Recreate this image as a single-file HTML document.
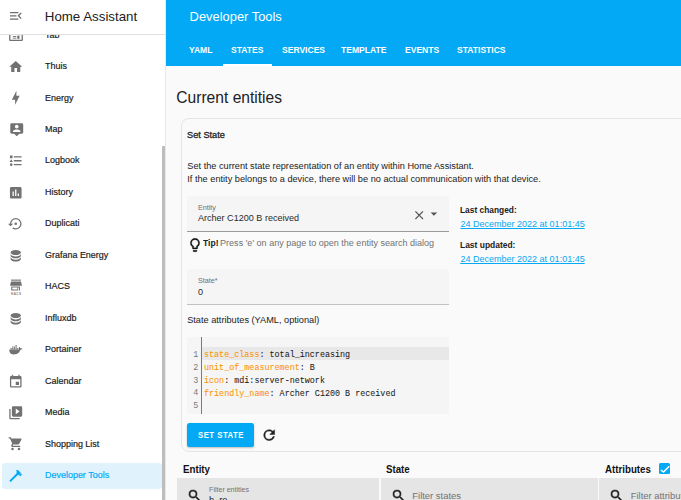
<!DOCTYPE html>
<html><head><meta charset="utf-8">
<style>
*{box-sizing:border-box;margin:0;padding:0}
html,body{width:681px;height:500px;overflow:hidden;background:#fafafa;font-family:"Liberation Sans",sans-serif;color:#212121}
.a{position:absolute;white-space:nowrap}
svg.i{position:absolute;display:block}
#sb{position:absolute;left:0;top:0;width:166px;height:500px;background:#fff;border-right:1px solid #e8e8e8;overflow:hidden}
#sbh{position:absolute;left:0;top:0;width:165px;height:35px;background:#fff;border-bottom:1px solid #e0e0e0;z-index:2}
.it{font-size:9.8px;line-height:9.8px;color:#212121;-webkit-text-stroke:0.2px #212121;transform:scaleX(0.915);transform-origin:0 0}
.ic{fill:#727272}
#hdr{position:absolute;left:166px;top:0;width:515px;height:66px;background:#03a9f4}
.tab{font:bold 9.2px/9.2px "Liberation Sans",sans-serif;color:#fff;top:45.8px;transform:scaleX(0.93);transform-origin:0 0}
.card{position:absolute;left:181px;top:118px;width:560px;height:334px;border:1px solid #e4e4e4;border-radius:8px;background:#fafafa}
.fld{position:absolute;background:#f5f5f5;border-radius:3px 3px 0 0;border-bottom:1px solid #8c8c8c}
.lbl{font-size:7.2px;line-height:7.2px;color:#6f6f6f}
.val{font-size:9.07px;line-height:9.07px;color:#2a2a2a}
.b9{font-size:9.2px;line-height:9.2px}
.bold{font-weight:bold}
.lnk{font-size:9.02px;line-height:9.02px;color:#03a9f4;text-decoration:underline}
.code{font-family:"Liberation Mono",monospace;font-size:9px;line-height:9px;color:#1a1a1a;-webkit-text-stroke:0.05px currentColor;transform:scaleX(0.933);transform-origin:0 0}
.k{color:#fb9400}
.ln{font-family:"Liberation Mono",monospace;font-size:8.4px;line-height:8.4px;color:#7a7a7a}
.th{font-weight:bold;font-size:10.8px;line-height:10.8px;color:#111;transform:scaleX(0.9);transform-origin:0 0}
.flt{position:absolute;top:478px;height:40px;background:#e5e5e5}
</style></head><body>

<!-- SIDEBAR -->
<div id="sb">
  <!-- items -->
  <!-- Tab (i=0) -->
  <svg class="i ic" style="left:4px;top:25.5px" width="25" height="20" viewBox="0 0 25 20"><path fill-rule="evenodd" d="M6.1 3H17.9Q18.9 3 18.9 4V14.1Q18.9 15.1 17.9 15.1H6.1Q5.1 15.1 5.1 14.1V4Q5.1 3 6.1 3ZM6.4 4.3V13.8H17.6V4.3Z"/><rect x="8.8" y="10" width="3.5" height="0.9"/><rect x="8.8" y="11.7" width="3.5" height="0.9"/><rect x="13.3" y="9.6" width="2.2" height="3.2"/></svg>
  <div class="a it" style="left:45.3px;top:29.5px">Tab</div>

  <svg class="i ic" style="left:8.25px;top:58.75px" width="15.5" height="15.5" viewBox="0 0 24 24"><path d="M10,20V14H14V20H19V12H22L12,3L2,12H5V20H10Z"/></svg>
  <div class="a it" style="left:45.3px;top:61.0px">Thuis</div>

  <svg class="i ic" style="left:8.25px;top:90.25px" width="15.5" height="15.5" viewBox="0 0 24 24"><path d="M11 15H6L13 1V9H18L11 23V15Z"/></svg>
  <div class="a it" style="left:45.3px;top:92.5px">Energy</div>

  <svg class="i ic" style="left:8.6px;top:121.75px" width="15.5" height="15.5" viewBox="0 0 24 24"><path fill-rule="evenodd" d="M20,2A2,2 0 0,1 22,4V16A2,2 0 0,1 20,18H16L12,22L8,18H4A2,2 0 0,1 2,16V4A2,2 0 0,1 4,2H20M12,4.2A2.9,2.9 0 0,0 9.1,7.1A2.9,2.9 0 0,0 12,10A2.9,2.9 0 0,0 14.9,7.1A2.9,2.9 0 0,0 12,4.2M17.8,15.4V14.5C17.8,12.5 14.2,11.5 12,11.5C9.8,11.5 6.2,12.5 6.2,14.5V15.4H17.8Z"/></svg>
  <div class="a it" style="left:45.3px;top:123.9px">Map</div>

  <svg class="i ic" style="left:8.25px;top:153.15px" width="15.5" height="15.5" viewBox="0 0 24 24"><path d="M5,9.5L7.5,14H2.5L5,9.5M3,4H7V8H3V4M5,20A2,2 0 0,0 7,18A2,2 0 0,0 5,16A2,2 0 0,0 3,18A2,2 0 0,0 5,20M9,5V7H21V5H9M9,19H21V17H9V19M9,13H21V11H9V13Z"/></svg>
  <div class="a it" style="left:45.3px;top:155.4px">Logbook</div>

  <svg class="i ic" style="left:8.25px;top:184.65px" width="15.5" height="15.5" viewBox="0 0 24 24"><path d="M9 17H7V10H9V17M13 17H11V7H13V17M17 17H15V13H17V17M19 3H5C3.9 3 3 3.9 3 5V19C3 20.1 3.9 21 5 21H19C20.1 21 21 20.1 21 19V5C21 3.9 20.1 3 19 3Z"/></svg>
  <div class="a it" style="left:45.3px;top:186.9px">History</div>

  <svg class="i ic" style="left:8.25px;top:216.15px" width="15.5" height="15.5" viewBox="0 0 24 24"><path d="M12,3A9,9 0 0,0 3,12H0L4,16L8,12H5A7,7 0 0,1 12,5A7,7 0 0,1 19,12A7,7 0 0,1 12,19C10.5,19 9.09,18.5 7.94,17.7L6.5,19.14C8.04,20.3 9.94,21 12,21A9,9 0 0,0 21,12A9,9 0 0,0 12,3M14,12A2,2 0 0,0 12,10A2,2 0 0,0 10,12A2,2 0 0,0 12,14A2,2 0 0,0 14,12Z"/></svg>
  <div class="a it" style="left:45.3px;top:218.4px">Duplicati</div>

  <svg class="i ic" style="left:8.25px;top:247.65px" width="15.5" height="15.5" viewBox="0 0 24 24"><path d="M12,3C7.58,3 4,4.79 4,7C4,9.21 7.58,11 12,11C16.42,11 20,9.21 20,7C20,4.79 16.42,3 12,3M4,9V12C4,14.21 7.58,16 12,16C16.42,16 20,14.21 20,12V9C20,11.21 16.42,13 12,13C7.58,13 4,11.21 4,9M4,14V17C4,19.21 7.58,21 12,21C16.42,21 20,19.21 20,17V14C20,16.21 16.42,18 12,18C7.58,18 4,16.21 4,14Z"/></svg>
  <div class="a it" style="left:45.3px;top:249.9px">Grafana Energy</div>

  <svg class="i ic" style="left:5px;top:275px" width="25" height="25" viewBox="0 0 25 25"><rect x="6" y="4.6" width="10" height="1.1"/><path d="M6 6.6H16L17 10.8H5Z"/><path d="M6.2 11.6H15V15.6H6.2Z M7.3 12.6V14.6H12.4V12.6Z M13.2 12.6V15.6H14V12.6Z" fill-rule="evenodd"/><text x="11" y="19.9" font-size="3" font-weight="bold" text-anchor="middle" font-family="Liberation Sans" fill="#777" textLength="10">HACS</text></svg>
  <div class="a it" style="left:45.3px;top:281.3px">HACS</div>

  <svg class="i ic" style="left:8.25px;top:310.55px" width="15.5" height="15.5" viewBox="0 0 24 24"><path d="M12,3C7.58,3 4,4.79 4,7C4,9.21 7.58,11 12,11C16.42,11 20,9.21 20,7C20,4.79 16.42,3 12,3M4,9V12C4,14.21 7.58,16 12,16C16.42,16 20,14.21 20,12V9C20,11.21 16.42,13 12,13C7.58,13 4,11.21 4,9M4,14V17C4,19.21 7.58,21 12,21C16.42,21 20,19.21 20,17V14C20,16.21 16.42,18 12,18C7.58,18 4,16.21 4,14Z"/></svg>
  <div class="a it" style="left:45.3px;top:312.8px">Influxdb</div>

  <svg class="i ic" style="left:8.25px;top:342.05px" width="15.5" height="15.5" viewBox="0 0 24 24"><path d="M21.81 10.25C21.75 10.21 21.25 9.82 20.17 9.82C19.89 9.82 19.61 9.85 19.33 9.9C19.12 8.5 17.95 7.79 17.9 7.76L17.61 7.59L17.43 7.86C17.19 8.22 17 8.63 16.92 9.05C16.72 9.85 16.84 10.61 17.25 11.26C16.76 11.54 15.96 11.61 15.79 11.61H2.62C2.27 11.61 2 11.89 2 12.24C2 13.39 2.17 14.54 2.57 15.62C3.03 16.81 3.72 17.69 4.61 18.23C5.61 18.84 7.27 19.190 9.15 19.19C10 19.19 10.85 19.11 11.67 18.96C12.82 18.75 13.92 18.36 14.94 17.78C15.78 17.29 16.530 16.67 17.17 15.95C18.24 14.74 18.88 13.39 19.35 12.19H19.54C20.71 12.19 21.43 11.72 21.83 11.33C22.1 11.08 22.29 10.78 22.43 10.43L22.5 10.21L21.81 10.25M3.94 11.24H5.77V9.27H3.94V11.24M6.5 11.24H8.33V9.27H6.5V11.24M9.1 11.24H10.93V9.27H9.1V11.24M11.66 11.24H13.5V9.27H11.66V11.24M6.5 8.9H8.33V6.93H6.5V8.9M9.1 8.9H10.93V6.93H9.1V8.9M11.66 8.9H13.5V6.93H11.66V8.9M11.66 6.55H13.5V4.58H11.66V6.55M14.22 11.24H16.06V9.27H14.22V11.24Z"/></svg>
  <div class="a it" style="left:45.3px;top:344.3px">Portainer</div>

  <svg class="i ic" style="left:8.25px;top:373.55px" width="15.5" height="15.5" viewBox="0 0 24 24"><path d="M19,19H5V8H19M16,1V3H8V1H6V3H5C3.89,3 3,3.89 3,5V19A2,2 0 0,0 5,21H19A2,2 0 0,0 21,19V5C21,3.89 20.1,3 19,3H18V1M17,12H12V17H17V12Z"/></svg>
  <div class="a it" style="left:45.3px;top:375.8px">Calendar</div>

  <svg class="i ic" style="left:8.25px;top:404.95px" width="15.5" height="15.5" viewBox="0 0 24 24"><path d="M4,6H2V20A2,2 0 0,0 4,22H18V20H4V6M20,2A2,2 0 0,1 22,4V16A2,2 0 0,1 20,18H8A2,2 0 0,1 6,16V4A2,2 0 0,1 8,2H20M12,14.5L18,10L12,5.5V14.5Z"/></svg>
  <div class="a it" style="left:45.3px;top:407.2px">Media</div>

  <svg class="i ic" style="left:8.25px;top:436.45px" width="15.5" height="15.5" viewBox="0 0 24 24"><path d="M17,18C15.89,18 15,18.89 15,20A2,2 0 0,0 17,22A2,2 0 0,0 19,20C19,18.89 18.1,18 17,18M1,2V4H3L6.6,11.59L5.24,14.04C5.09,14.32 5,14.65 5,15A2,2 0 0,0 7,17H19V15H7.42A0.25,0.25 0 0,1 7.17,14.75C7.17,14.7 7.18,14.66 7.2,14.63L8.1,13H15.55C16.3,13 16.96,12.58 17.3,11.97L20.88,5.5C20.95,5.34 21,5.17 21,5A1,1 0 0,0 20,4H5.21L4.27,2M7,18C5.89,18 5,18.89 5,20A2,2 0 0,0 7,22A2,2 0 0,0 9,20C9,18.89 8.1,18 7,18Z"/></svg>
  <div class="a it" style="left:45.3px;top:438.7px">Shopping List</div>

  <div class="a" style="left:2px;top:462.5px;width:159.5px;height:26px;border-radius:3px;background:#e0f3fd"></div>
  <svg class="i" style="left:8.25px;top:467.95px;fill:#03a9f4" width="15.5" height="15.5" viewBox="0 0 24 24"><path d="M2 19.63L13.43 8.2L12.72 7.5L14.14 6.07L12 3.89C13.2 2.7 15.09 2.7 16.27 3.89L19.87 7.5L18.45 8.91H21.29L22 9.62L18.45 13.21L17.74 12.5V9.62L16.27 11.04L15.56 10.33L4.13 21.76L2 19.63Z"/></svg>
  <div class="a it" style="left:45.3px;top:470.2px;color:#03a9f4;-webkit-text-stroke:0.2px #03a9f4">Developer Tools</div>

  <!-- scrollbar -->
  <div class="a" style="left:162px;top:145.5px;width:4px;height:360px;background:#bdbdbd;border-radius:1px"></div>
</div>
<div id="sbh">
  <svg class="i" style="left:8px;top:8px;fill:#6f6f6f" width="15.6" height="15.6" viewBox="0 0 24 24"><path d="M21,15.61L19.59,17L14.58,12L19.59,7L21,8.39L17.44,12L21,15.61M3,6H16V8H3V6M3,13V11H13V13H3M3,18V16H16V18H3Z"/></svg>
  <div class="a" style="left:44.8px;top:10.2px;font-size:13.3px;line-height:13.3px;color:#212121">Home Assistant</div>
</div>

<!-- HEADER -->
<div id="hdr"></div>
<div class="a" style="left:189.6px;top:11px;font-size:12.9px;line-height:12.9px;color:#fff">Developer Tools</div>
<div class="a tab" style="left:189px">YAML</div>
<div class="a tab" style="left:231.4px">STATES</div>
<div class="a tab" style="left:281.6px">SERVICES</div>
<div class="a tab" style="left:341.4px">TEMPLATE</div>
<div class="a tab" style="left:405.2px">EVENTS</div>
<div class="a tab" style="left:457px">STATISTICS</div>
<div class="a" style="left:223px;top:64px;width:48.6px;height:2px;background:#fff"></div>

<!-- CONTENT -->
<div class="a" style="left:176.3px;top:89.5px;font-size:15.6px;line-height:15.6px;color:#212121">Current entities</div>

<div class="card"></div>
<div class="a" style="left:187.2px;top:129.6px;font-size:9.6px;line-height:9.6px;color:#212121;-webkit-text-stroke:0.3px #212121;transform:scaleX(0.96);transform-origin:0 0">Set State</div>
<div class="a b9" style="left:187.3px;top:162px">Set the current state representation of an entity within Home Assistant.</div>
<div class="a b9" style="left:187.3px;top:175.1px">If the entity belongs to a device, there will be no actual communication with that device.</div>

<!-- entity field -->
<div class="fld" style="left:187.2px;top:195.8px;width:261.5px;height:36.2px;border-bottom-color:#9a9a9a"></div>
<div class="a lbl" style="left:197.9px;top:203.6px">Entity</div>
<div class="a val" style="left:197.9px;top:214.1px">Archer C1200 B received</div>
<svg class="i" style="left:412.2px;top:208.2px;fill:#555" width="14.4" height="14.4" viewBox="0 0 24 24"><path d="M19,6.41L17.59,5L12,10.59L6.41,5L5,6.41L10.59,12L5,17.59L6.41,19L12,13.41L17.59,19L19,17.59L13.41,12L19,6.41Z"/></svg>
<svg class="i" style="left:426px;top:206px;fill:#555" width="15.8" height="15.8" viewBox="0 0 24 24"><path d="M7,10L12,15L17,10H7Z"/></svg>

<!-- tip -->
<svg class="i" style="left:187.2px;top:236.9px;fill:#111" width="16" height="16" viewBox="0 0 24 24"><path stroke="#111" stroke-width="0.4" d="M12,2A7,7 0 0,1 19,9C19,11.38 17.81,13.47 16,14.74V17A1,1 0 0,1 15,18H9A1,1 0 0,1 8,17V14.74C6.19,13.47 5,11.38 5,9A7,7 0 0,1 12,2M9,21V20H15V21A1,1 0 0,1 14,22H10A1,1 0 0,1 9,21M12,4A5,5 0 0,0 7,9C7,11.05 8.23,12.81 10,13.58V16H14V13.58C15.77,12.81 17,11.05 17,9A5,5 0 0,0 12,4Z"/></svg>
<div class="a bold" style="left:202.9px;top:238.5px;font-size:9.2px;line-height:9.2px;color:#212121;transform:scaleX(0.93);transform-origin:0 0">Tip!</div>
<div class="a" style="left:220.1px;top:238.6px;font-size:9.02px;line-height:9.02px;color:#727272">Press 'e' on any page to open the entity search dialog</div>

<!-- last changed -->
<div class="a bold" style="left:460.4px;top:205.9px;font-size:9.2px;line-height:9.2px;color:#212121;transform:scaleX(0.91);transform-origin:0 0">Last changed:</div>
<div class="a lnk" style="left:460.4px;top:220px">24 December 2022 at 01:01:45</div>
<div class="a bold" style="left:460.4px;top:241.2px;font-size:9.2px;line-height:9.2px;color:#212121;transform:scaleX(0.92);transform-origin:0 0">Last updated:</div>
<div class="a lnk" style="left:460.4px;top:255px">24 December 2022 at 01:01:45</div>

<!-- state field -->
<div class="fld" style="left:187.2px;top:269.3px;width:261.5px;height:36.2px;border-bottom:1.5px solid #c2c2c2"></div>
<div class="a lbl" style="left:197.9px;top:277.1px">State*</div>
<div class="a val" style="left:197.9px;top:287.7px">0</div>

<div class="a b9" style="left:187.2px;top:315.9px">State attributes (YAML, optional)</div>

<!-- code editor -->
<div class="a" style="left:187.2px;top:336.8px;width:262px;height:76.8px;background:#f5f5f5;border-radius:3px 3px 0 0"></div>
<div class="a" style="left:202px;top:347.1px;width:247.2px;height:12.6px;background:#e8e8e8"></div>
<div class="a" style="left:201px;top:336.8px;width:1px;height:76.8px;background:#7a7a7a"></div>
<div class="a ln" style="left:193.2px;top:351.0px">1</div>
<div class="a ln" style="left:193.2px;top:363.8px">2</div>
<div class="a ln" style="left:193.2px;top:376.6px">3</div>
<div class="a ln" style="left:193.2px;top:389.4px">4</div>
<div class="a ln" style="left:193.2px;top:402.2px">5</div>
<div class="a code" style="left:204.3px;top:351.4px"><span class="k">state_class</span>: total_increasing</div>
<div class="a code" style="left:204.3px;top:364.2px"><span class="k">unit_of_measurement</span>: B</div>
<div class="a code" style="left:204.3px;top:377.0px"><span class="k">icon</span>: mdi:server-network</div>
<div class="a code" style="left:204.3px;top:389.8px"><span class="k">friendly_name</span>: Archer C1200 B received</div>

<!-- button -->
<div class="a" style="left:187px;top:423.2px;width:67px;height:23.8px;background:#03a9f4;border-radius:2.5px;box-shadow:0 1px 2px rgba(0,0,0,0.25)"></div>
<div class="a bold" style="left:197.9px;top:431.1px;font-size:9.2px;line-height:9.2px;letter-spacing:0.6px;color:#fff;transform:scaleX(0.843);transform-origin:0 0">SET STATE</div>
<svg class="i" style="left:261.3px;top:427px;fill:#212121" width="16.3" height="16.3" viewBox="0 0 24 24"><path stroke="#212121" stroke-width="0.7" d="M17.65,6.35C16.2,4.9 14.21,4 12,4A8,8 0 0,0 4,12A8,8 0 0,0 12,20C15.73,20 18.84,17.45 19.73,14H17.65C16.83,16.33 14.61,18 12,18A6,6 0 0,1 6,12A6,6 0 0,1 12,6C13.66,6 15.14,6.69 16.22,7.78L13,11H20V4L17.65,6.35Z"/></svg>

<!-- table header -->
<div class="a th" style="left:182.6px;top:464.3px">Entity</div>
<div class="a th" style="left:385.8px;top:464.3px">State</div>
<div class="a th" style="left:604.8px;top:464.3px">Attributes</div>
<div class="a" style="left:658.8px;top:462.5px;width:11.7px;height:11.8px;background:#03a9f4;border-radius:1.5px"></div>
<svg class="i" style="left:658.8px;top:462.5px" width="11.7" height="11.8" viewBox="0 0 24 24"><path d="M3.8 14.2L9.3 18.6L21 6.5" fill="none" stroke="#fff" stroke-width="3"/></svg>

<div class="flt" style="left:177.2px;width:201.6px"></div>
<div class="flt" style="left:381px;width:216.7px"></div>
<div class="flt" style="left:599px;width:100px"></div>
<svg class="i" style="left:187.4px;top:487.8px;fill:#212121" width="15.2" height="15.2" viewBox="0 0 24 24"><path stroke="#212121" stroke-width="0.6" d="M9.5,3A6.5,6.5 0 0,1 16,9.5C16,11.11 15.41,12.59 14.44,13.73L14.71,14H15.5L20.5,19L19,20.5L14,15.5V14.71L13.73,14.44C12.59,15.41 11.11,16 9.5,16A6.5,6.5 0 0,1 3,9.5A6.5,6.5 0 0,1 9.5,3M9.5,5C7,5 5,7 5,9.5C5,12 7,14 9.5,14C12,14 14,12 14,9.5C14,7 12,5 9.5,5Z"/></svg>
<svg class="i" style="left:390.6px;top:487.8px;fill:#212121" width="15.2" height="15.2" viewBox="0 0 24 24"><path stroke="#212121" stroke-width="0.6" d="M9.5,3A6.5,6.5 0 0,1 16,9.5C16,11.11 15.41,12.59 14.44,13.73L14.71,14H15.5L20.5,19L19,20.5L14,15.5V14.71L13.73,14.44C12.59,15.41 11.11,16 9.5,16A6.5,6.5 0 0,1 3,9.5A6.5,6.5 0 0,1 9.5,3M9.5,5C7,5 5,7 5,9.5C5,12 7,14 9.5,14C12,14 14,12 14,9.5C14,7 12,5 9.5,5Z"/></svg>
<svg class="i" style="left:609.4px;top:487.8px;fill:#212121" width="15.2" height="15.2" viewBox="0 0 24 24"><path stroke="#212121" stroke-width="0.6" d="M9.5,3A6.5,6.5 0 0,1 16,9.5C16,11.11 15.41,12.59 14.44,13.73L14.71,14H15.5L20.5,19L19,20.5L14,15.5V14.71L13.73,14.44C12.59,15.41 11.11,16 9.5,16A6.5,6.5 0 0,1 3,9.5A6.5,6.5 0 0,1 9.5,3M9.5,5C7,5 5,7 5,9.5C5,12 7,14 9.5,14C12,14 14,12 14,9.5C14,7 12,5 9.5,5Z"/></svg>
<div class="a" style="left:209.1px;top:486px;font-size:7.04px;line-height:7.04px;color:#727272">Filter entities</div>
<div class="a" style="left:209.1px;top:495.6px;font-size:9.2px;line-height:9.2px;color:#212121">h_re</div>
<div class="a" style="left:412.3px;top:490.8px;font-size:9.44px;line-height:9.44px;color:#727272">Filter states</div>
<div class="a" style="left:630.7px;top:490.8px;font-size:9.44px;line-height:9.44px;color:#727272">Filter attributes</div>

</body></html>
